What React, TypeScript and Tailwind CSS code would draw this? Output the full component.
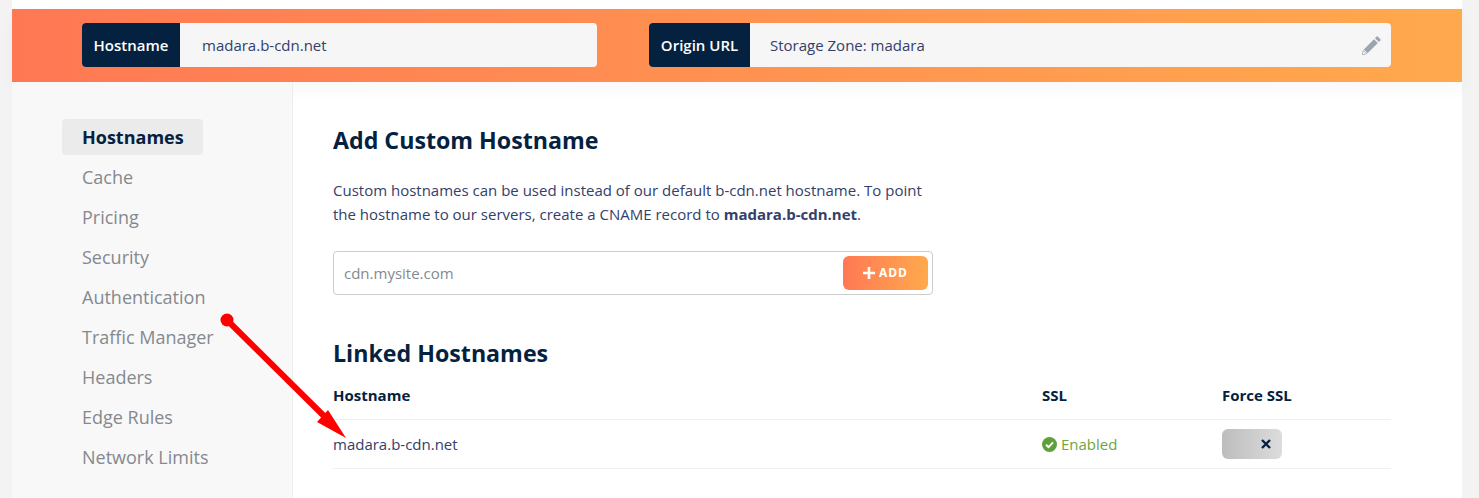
import React from "react";

const items = ["Cache", "Pricing", "Security", "Authentication", "Traffic Manager", "Headers", "Edge Rules", "Network Limits"];

function Pencil() {
  return (
    <svg width="19" height="19" viewBox="0 0 19 19" className="block">
      <path d="M13 2.2 L14.6 0.6 Q15.2 0.1 15.8 0.6 L18.4 3.2 Q18.9 3.8 18.4 4.4 L16.8 6 Z" fill="#9aa5b1" />
      <path d="M12 3.2 L15.8 7 L5.6 17.2 L1.8 13.4 Z" fill="#9aa5b1" />
      <path d="M1.3 14.4 L4.6 17.7 L0.2 18.8 Z" fill="#ffffff" stroke="#9aa5b1" strokeWidth="0.8" />
    </svg>
  );
}

export default function App() {
  return (
    <div className="relative h-[498px] w-[1479px] overflow-hidden bg-[#f3f3f3] px-3 font-['Open_Sans',sans-serif] text-[#33406b]">
      <div className="h-full w-[1450px] bg-white pt-[9px]">
        <div className="flex h-[73px] items-center bg-gradient-to-r from-[#ff7854] to-[#ffa94d] pb-[2px] pl-[70px] shadow-[0_8px_16px_rgba(0,0,0,0.03)]">
          <div className="flex h-11 w-[515px] overflow-hidden rounded bg-[#f6f6f6]">
            <div className="flex w-[98px] items-center justify-center bg-[#04223f] pt-px text-[15px] font-semibold text-white">Hostname</div>
            <div className="flex items-center pl-[22px] pt-px text-[15px]">madara.b-cdn.net</div>
          </div>
          <div className="ml-[52px] flex h-11 w-[742px] overflow-hidden rounded bg-[#f6f6f6]">
            <div className="flex w-[101px] items-center justify-center bg-[#04223f] pt-px text-[15px] font-semibold text-white">Origin URL</div>
            <div className="flex flex-1 items-center justify-between pl-[20px] pr-[10px] pt-px text-[15px]">
              <span>Storage Zone: madara</span>
              <Pencil />
            </div>
          </div>
        </div>
        <div className="flex h-[416px]">
          <aside className="w-[281px] shrink-0 border-r border-[#eeeeee] bg-[#f8f8f8] pl-[50px] pt-[37px]">
            <div className="flex h-9 w-[141px] items-center rounded bg-[#ebebeb] pl-5 text-lg font-bold text-[#04223f]">Hostnames</div>
            <div className="mt-[9px] flex flex-col gap-[14px] pl-5 text-lg leading-[26px] text-[#85898f]">
              {items.map((t) => (
                <div key={t}>{t}</div>
              ))}
            </div>
          </aside>
          <main className="flex-1 pl-10 pr-[71px] pt-[40px]">
            <h1 className="text-[23.2px] leading-9 font-bold text-[#04223f]">Add Custom Hostname</h1>
            <p className="mt-[20px] text-[15px] leading-6">
              Custom hostnames can be used instead of our default b-cdn.net hostname. To point
              <br />
              the hostname to our servers, create a CNAME record to <b className="font-bold">madara.b-cdn.net</b>.
            </p>
            <div className="mt-[25px] flex h-11 w-[600px] items-center justify-between rounded border border-[#cccccc] pl-[10px] pr-1">
              <span className="text-[15px] text-[#85898f]">cdn.mysite.com</span>
              <button className="flex h-[34px] w-[85px] items-center justify-center gap-1 rounded-md bg-gradient-to-r from-[#ff7854] to-[#ffa94d] text-xs font-bold tracking-[0.08em] text-white">
                <svg width="12" height="12" viewBox="0 0 12 12"><path d="M6 0v12M0 6h12" stroke="#fff" strokeWidth="2.6" /></svg>
                ADD
              </button>
            </div>
            <h2 className="mt-[40px] text-[23.2px] leading-9 font-bold text-[#04223f]">Linked Hostnames</h2>
            <div className="mt-[14px] flex h-[35px] items-center border-b border-[#f0f0f0] pb-[13px] text-[15px] font-bold text-[#04223f]">
              <div className="w-[709px]">Hostname</div>
              <div className="w-[180px]">SSL</div>
              <div>Force SSL</div>
            </div>
            <div className="flex h-[49px] items-center border-b border-[#f0f0f0] text-[15px]">
              <div className="w-[709px]">madara.b-cdn.net</div>
              <div className="flex w-[180px] items-center gap-1 text-[#6fa63a]">
                <svg width="15" height="15" viewBox="0 0 15 15">
                  <circle cx="7.5" cy="7.5" r="7.5" fill="#5fa03a" />
                  <path d="M4 7.8 L6.5 10.2 L11 5.4" fill="none" stroke="#fff" strokeWidth="2" />
                </svg>
                Enabled
              </div>
              <div className="flex h-[30px] w-[60px] items-center justify-end rounded-md bg-gradient-to-r from-[#bdbdbd] to-[#dcdcdc] pr-[11px]">
                <svg width="10" height="10" viewBox="0 0 10 10"><path d="M1 1l8 8M9 1l-8 8" stroke="#04223f" strokeWidth="2.4" /></svg>
              </div>
            </div>
          </main>
        </div>
      </div>
      <svg className="pointer-events-none absolute left-0 top-0" width="1479" height="498">
        <circle cx="227" cy="320" r="6.5" fill="#fe0000" />
        <path d="M227 320 L328 420" stroke="#fe0000" strokeWidth="6" />
        <path d="M346 438 L317 422 L328 410 Z" fill="#fe0000" />
      </svg>
    </div>
  );
}
